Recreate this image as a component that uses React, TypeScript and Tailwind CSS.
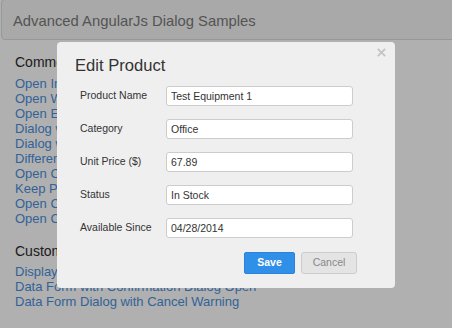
const commonLinks = [
  "Open Information Dialog",
  "Open Wait Dialog",
  "Open Error Dialog",
  "Dialog with Custom Header",
  "Dialog with Custom Footer",
  "Different Size Dialogs",
  "Open Confirmation Dialog",
  "Keep Page Scroll Position",
  "Open Chained Dialogs",
  "Open Custom Template Dialog",
];

const customLinks = [
  "Display Data Form Dialog",
  "Data Form with Confirmation Dialog Open",
  "Data Form Dialog with Cancel Warning",
];

const fields = [
  { label: "Product Name", value: "Test Equipment 1" },
  { label: "Category", value: "Office" },
  { label: "Unit Price ($)", value: "67.89" },
  { label: "Status", value: "In Stock" },
  { label: "Available Since", value: "04/28/2014" },
];

const CloseIcon = () => (
  <svg width="9" height="9" viewBox="0 0 9 9" fill="none" stroke="currentColor" strokeWidth="1.8" aria-hidden>
    <path d="M0.8 0.8l7.4 7.4M8.2 0.8l-7.4 7.4" />
  </svg>
);

export default function App() {
  return (
    <div className="relative h-[328px] w-[452px] overflow-hidden bg-white font-['Liberation_Sans',Arial,sans-serif]">
      {/* page underneath */}
      <div className="-mt-px ml-px -mr-3 h-[41px] rounded border border-[#ddd] bg-[#f5f5f5] pl-[11px] pt-[12px]">
        <h1 className="text-[14.8px] leading-[18px] text-[#7a7a7a]">Advanced AngularJs Dialog Samples</h1>
      </div>

      <div className="pl-[15px] pt-[14px]">
        <h4 className="text-[14px] leading-[17px] text-[#2b2b2b]">Common Dialogs</h4>
        <ul className="mt-[5px] text-[13px] leading-[15px] text-[#4a8fdc]">
          {commonLinks.map((l) => (
            <li key={l}>
              <a href="#">{l}</a>
            </li>
          ))}
        </ul>

        <h4 className="mt-[17px] text-[14px] leading-[17px] text-[#2b2b2b]">Custom Dialogs</h4>
        <ul className="mt-[4px] text-[13px] leading-[15px] text-[#4a8fdc]">
          {customLinks.map((l) => (
            <li key={l}>
              <a href="#">{l}</a>
            </li>
          ))}
        </ul>
      </div>

      {/* backdrop */}
      <div className="absolute inset-0 bg-black/[0.31]" />

      {/* dialog */}
      <div className="absolute left-[57px] top-[42px] h-[246px] w-[338px] rounded-[4px] bg-[#efefef]">
        <button type="button" aria-label="Close" className="absolute left-[320px] top-[6px] text-[#c4c4c4]">
          <CloseIcon />
        </button>

        <div className="px-[18px] pt-[13px]">
          <h3 className="text-[16.6px] leading-[22px] text-[#333]">Edit Product</h3>
        </div>

        <form className="mt-[9px] flex flex-col gap-[13px] pl-[23px] text-[10.5px] text-[#333]">
          {fields.map((f) => (
            <div key={f.label} className="flex items-center">
              <label className="w-[86px]">{f.label}</label>
              <input
                defaultValue={f.value}
                className="h-[20px] w-[187px] rounded-[3px] border border-[#ccc] bg-white pl-[4px] text-[10.5px] text-[#333] outline-none"
              />
            </div>
          ))}
        </form>

        <div className="mt-[14px] flex justify-end gap-[6px] pr-[38px] text-[10.5px]">
          <button type="button" className="h-[22px] w-[51px] rounded-[2px] border border-[#2a82dc] bg-[#3090e8] font-bold text-white">
            Save
          </button>
          <button type="button" className="h-[22px] w-[56px] rounded-[3px] border border-[#ccc] bg-[#e4e4e4] text-[#888]">
            Cancel
          </button>
        </div>
      </div>
    </div>
  );
}
